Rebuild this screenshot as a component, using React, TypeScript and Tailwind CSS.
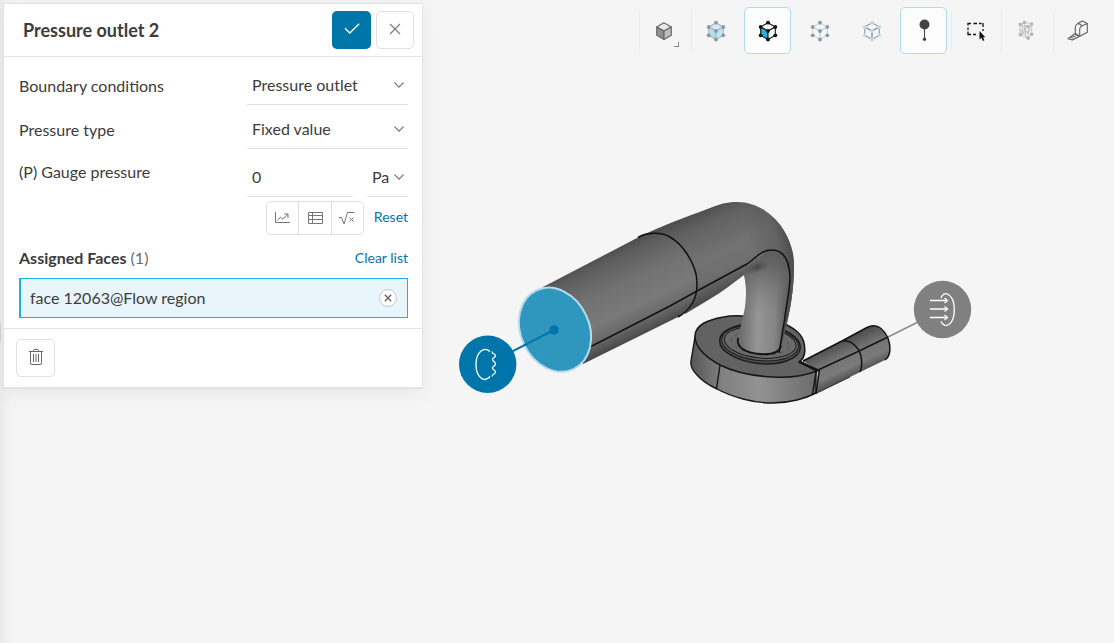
import type { ReactNode } from "react";

const Chevron = ({ className = "" }: { className?: string }) => (
  <svg
    viewBox="0 0 10 6"
    className={`h-[6px] w-[10px] pointer-events-none ${className}`}
    fill="none"
    stroke="#777"
    strokeWidth="1.1"
    aria-hidden="true"
  >
    <path d="M0.5 0.5 5 5.2 9.5 0.5" />
  </svg>
);

type SelectProps = {
  id: string;
  label: string;
  options: string[];
};

const SelectRow = ({ id, label, options }: SelectProps) => (
  <div className="flex items-center">
    <label htmlFor={id} className="w-[228px] shrink-0 pb-px">
      {label}
    </label>
    <div className="grid flex-1 items-center border-b border-[#dfdfdf] pb-[2px]">
      <select
        id={id}
        className="col-start-1 row-start-1 h-[35px] w-full appearance-none bg-transparent pl-[5px] outline-none"
      >
        {options.map((option) => (
          <option key={option}>{option}</option>
        ))}
      </select>
      <Chevron className="col-start-1 row-start-1 mr-1 justify-self-end" />
    </div>
  </div>
);

const toolClass =
  "flex h-8 items-center justify-center text-[#777] border-[#dfdfdf]";

const BoundaryPanel = () => (
  <section
    aria-labelledby="panel-title"
    className="border border-b-2 border-[#e3e3e3] bg-white text-base text-[#3c3c3c] shadow-[0_4px_20px_rgba(0,0,0,0.06)]"
  >
    <header className="flex items-center gap-[5px] border-b border-[#e3e3e3] py-[7px] pl-[19px] pr-2">
      <h1 id="panel-title" className="flex-1 text-lg font-bold leading-6">
        Pressure outlet 2
      </h1>
      <button
        aria-label="Apply"
        className="flex h-[38px] w-[39px] items-center justify-center rounded-[5px] bg-[#0075a9] pb-[2px]"
      >
        <svg viewBox="0 0 16 12" className="h-3 w-4" fill="none" stroke="#fff" strokeWidth="1.3">
          <path d="M1 5.2 5.8 10 15.2 0.8" />
        </svg>
      </button>
      <button
        aria-label="Close"
        className="flex h-[38px] w-[38px] items-center justify-center rounded-[5px] border border-[#e0e0e0] pb-[2px]"
      >
        <svg viewBox="0 0 12 12" className="h-3 w-3" fill="none" stroke="#777" strokeWidth="1.1">
          <path d="M1 1 11 11M11 1 1 11" />
        </svg>
      </button>
    </header>

    <div className="pb-[10px] pl-[15px] pr-[14px] pt-[10px]">
      <div className="flex flex-col gap-[6px]">
        <SelectRow
          id="condition"
          label="Boundary conditions"
          options={["Pressure outlet", "Pressure inlet", "Velocity inlet", "Wall"]}
        />
        <SelectRow
          id="pressure-type"
          label="Pressure type"
          options={["Fixed value", "Mean value"]}
        />
      </div>

      <div className="mt-[10px] flex items-start">
        <label htmlFor="gauge" className="w-[228px] shrink-0 leading-[26px]">
          (P) Gauge pressure
        </label>
        <input
          id="gauge"
          defaultValue="0"
          className="h-[38px] min-w-0 flex-1 border-b border-[#dfdfdf] pb-[2px] pl-[5px] outline-none"
        />
        <div className="ml-[14px] grid w-[41px] items-center border-b border-[#dfdfdf] pb-[2px]">
          <select
            aria-label="Pressure unit"
            className="col-start-1 row-start-1 h-[35px] w-full appearance-none bg-transparent pl-[5px] outline-none"
          >
            <option>Pa</option>
            <option>psi</option>
          </select>
          <Chevron className="col-start-1 row-start-1 mr-1 justify-self-end" />
        </div>
      </div>

      <div className="mt-1 flex items-center justify-end gap-[10px]">
        <div className="flex rounded-[5px] border border-[#dfdfdf]">
          <button aria-label="Upload table" className={`${toolClass} w-[31px]`}>
            <svg viewBox="0 0 16 12" className="h-3 w-4" fill="none" stroke="currentColor">
              <path d="M1.5 0V10.5H16" />
              <path d="M3.5 8.5 6.5 5 9 7.2 13.5 2.5M10 2H14V6" />
            </svg>
          </button>
          <button aria-label="Table" className={`${toolClass} w-[33px] border-l`}>
            <svg viewBox="0 0 16 12" className="h-3 w-4" fill="none" stroke="currentColor">
              <path d="M1.5 0.5H15.5V11.5H1.5ZM5.5 0.5V11.5M1.5 3.5H15.5M1.5 7.5H15.5" />
            </svg>
          </button>
          <button aria-label="Formula" className={`${toolClass} w-8 border-l`}>
            <svg viewBox="0 0 16 14" className="h-[14px] w-4" fill="none" stroke="currentColor">
              <path d="M0 6.5H2.5L5 13 8.5 1.5H15.5" />
              <path d="M10.5 6.5 14.5 10.5M14.5 6.5 10.5 10.5" />
            </svg>
          </button>
        </div>
        <button className="pb-[2px] text-sm text-[#0075a9]">Reset</button>
      </div>

      <div className="mt-[11px] flex items-center justify-between leading-6">
        <h2>
          <span className="font-bold">Assigned Faces</span>{" "}
          <span className="text-[#6b6b6b]">(1)</span>
        </h2>
        <button className="text-sm text-[#0075a9]">Clear list</button>
      </div>

      <ul className="mt-2">
        <li className="flex h-10 items-center justify-between border border-l-2 border-[#21b0e0] bg-[#e8f5fb] pl-[9px] pr-[10px]">
          <span>face 12063@Flow region</span>
          <button
            aria-label="Remove face"
            className="flex h-[18px] w-[18px] items-center justify-center rounded-full border border-[#c6c6c6] bg-white"
          >
            <svg viewBox="0 0 8 8" className="h-2 w-2" fill="none" stroke="#666" strokeWidth="1.4">
              <path d="M0.8 0.8 7.2 7.2M7.2 0.8 0.8 7.2" />
            </svg>
          </button>
        </li>
      </ul>
    </div>

    <footer className="border-t border-[#e3e3e3] px-3 py-[10px]">
      <button
        aria-label="Delete"
        className="flex h-[38px] w-[39px] items-center justify-center rounded-[5px] border border-[#e0e0e0] pb-[2px]"
      >
        <svg viewBox="0 0 14 16" className="h-4 w-[14px]" fill="none" stroke="#666">
          <path d="M0 2.5H14M4.5 2.5V1.5Q4.5 0.5 5.5 0.5H8.5Q9.5 0.5 9.5 1.5V2.5" />
          <path d="M1.5 2.5V14Q1.5 15.5 3 15.5H11Q12.5 15.5 12.5 14V2.5" />
          <path d="M4.5 5V13M7 5V13M9.5 5V13" />
        </svg>
      </button>
    </footer>
  </section>
);

const cubeNodes = [
  [12, 3.7],
  [4.7, 8],
  [19.3, 8],
  [12, 12],
  [4.7, 16.3],
  [19.3, 16.3],
  [12, 20.5],
];

type CubeProps = {
  line: string;
  node?: string;
  top?: string;
  left?: string;
  right?: string;
};

const Cube = ({ line, node, top = "none", left = "none", right = "none" }: CubeProps) => (
  <svg viewBox="0 0 24 24" className="h-6 w-6" aria-hidden="true">
    <g stroke={line} strokeWidth="1.1" strokeLinejoin="round">
      <path d="M12 3.7 19.3 8 12 12 4.7 8Z" fill={top} />
      <path d="M4.7 8 12 12V20.5L4.7 16.3Z" fill={left} />
      <path d="M19.3 8 12 12V20.5L19.3 16.3Z" fill={right} />
    </g>
    {node &&
      cubeNodes.map(([cx, cy]) => <circle key={`${cx}-${cy}`} cx={cx} cy={cy} r="1.9" fill={node} />)}
  </svg>
);

type ToolProps = {
  label: string;
  active?: boolean;
  divider?: boolean;
  narrow?: boolean;
  children: ReactNode;
};

const Tool = ({ label, active, divider, narrow, children }: ToolProps) => (
  <div className={`flex items-center ${narrow ? "w-[50px]" : "w-[52px]"}`}>
    <span className={`h-10 w-px ${divider ? "bg-[#ebebeb]" : ""}`} />
    <button
      aria-label={label}
      aria-pressed={active}
      className={`relative flex h-[47px] w-[47px] items-center justify-center rounded-[5px] border pt-px ${
        active ? "border-[#b3daec] bg-[#fcfcfc]" : "border-transparent"
      }`}
    >
      {children}
    </button>
  </div>
);

const Toolbar = () => (
  <nav aria-label="View tools" className="flex justify-end pr-[9px]">
    <Tool label="Render mode" divider>
      <Cube line="#666" top="#e9e9e9" left="#909090" right="#bdbdbd" />
      <span className="absolute bottom-[6px] right-[7px] h-[5px] w-[5px] border-b border-r border-[#888]" />
    </Tool>
    <Tool label="Select volumes" divider>
      <Cube line="#a3b9c3" node="#979797" top="#d3ebf6" left="#b5dff1" right="#c3e5f3" />
    </Tool>
    <Tool label="Select faces" active>
      <Cube line="#1a1a1a" node="#111" left="#21b0e0" top="#fff" right="#fff" />
    </Tool>
    <Tool label="Select edges">
      <Cube line="#b7e0f2" node="#979797" />
    </Tool>
    <Tool label="Select vertices">
      <Cube line="#999" node="#b5e0f3" />
    </Tool>
    <Tool label="Probe" active>
      <svg viewBox="0 0 24 24" className="h-6 w-6" aria-hidden="true">
        <circle cx="12.5" cy="5.5" r="5" fill="#444" />
        <path d="M12.5 9V20" stroke="#444" strokeWidth="1.1" />
        <circle cx="12.5" cy="20.3" r="1.7" fill="#444" />
      </svg>
    </Tool>
    <Tool label="Box select" divider narrow>
      <svg viewBox="0 0 24 24" className="h-6 w-6" aria-hidden="true">
        <path
          d="M4 6.5V4.5H7M9.5 4.5H13M15 4.5H17.5M19 4V8M19 10V12M4 8.5V11M4 12.5V15.5H7M9 15.5H12"
          fill="none"
          stroke="#111"
          strokeWidth="1.3"
        />
        <path d="M15.5 12V20.5L17.4 18.8 18.9 22 20.4 21.3 19 18.2H21.3Z" fill="#111" />
      </svg>
    </Tool>
    <Tool label="Mesh" divider>
      <svg viewBox="0 0 24 24" className="h-6 w-6" fill="none" stroke="#c4c4c4" strokeWidth="0.9" aria-hidden="true">
        <path d="M6 5.5 10.5 3.3 17.7 4.7 14 7.5ZM6 5.5V15.5L14.2 19.3V7.5M17.7 4.7V15.3L14.2 19.3M10.5 3.3V13L6 15.5M10.5 13 17.700 15.300" />
        <path d="M6 10.500 14 13.500 17.700 10M8.500 6.500V16.500M11.500 7V18M6 5.500 14 13.500M6 15.500 14 7.500M6 10.500 14.200 19.300M14 13.500 17.700 4.700" />
        <g fill="#b4b4b4" stroke="none">
          <circle cx="6.200" cy="5.500" r="1.700" />
          <circle cx="10.500" cy="3.500" r="1.700" />
          <circle cx="17.700" cy="4.900" r="1.700" />
          <circle cx="14" cy="7.500" r="1.700" />
          <circle cx="6.200" cy="15.700" r="1.700" />
          <circle cx="14.200" cy="19.200" r="1.700" />
          <circle cx="17.700" cy="15.300" r="1.700" />
        </g>
      </svg>
    </Tool>
    <Tool label="Measure" divider>
      <svg
        viewBox="0 0 24 24"
        className="h-6 w-6"
        fill="none"
        stroke="#606060"
        strokeWidth="1.1"
        strokeLinejoin="round"
        aria-hidden="true"
      >
        <path d="M9.300 14.500V8Q9.700 5.800 11.700 4.600L16.300 2 21.300 4.500V13.300L13.700 17.300" />
        <path d="M13.700 17.300V10Q14 7.600 16.300 6.700L21.300 4.500M11.700 4.600Q14.300 4.600 16 6.800" />
        <path d="M9.300 14.500 2 19.800 6.500 21 13.700 17.300Z" />
        <path d="M4.500 18.500 7.500 19.300M6.600 17 9.500 18M9 15.600 12 16.800" />
      </svg>
    </Tool>
  </nav>
);

const Model = () => (
  <svg viewBox="450 190 530 220" className="h-[220px] w-[530px]" role="img" aria-label="Flow region geometry">
    <defs>
      <linearGradient id="pipe" gradientUnits="userSpaceOnUse" x1="620" y1="243" x2="660" y2="327">
        <stop offset="0" stopColor="#484848" />
        <stop offset="0.12" stopColor="#5c5c5c" />
        <stop offset="0.4" stopColor="#717171" />
        <stop offset="0.68" stopColor="#7a7a7a" />
        <stop offset="0.85" stopColor="#696969" />
        <stop offset="1" stopColor="#484848" />
      </linearGradient>
      <linearGradient id="bend" gradientUnits="userSpaceOnUse" x1="708" y1="205" x2="744" y2="283">
        <stop offset="0" stopColor="#4c4c4c" />
        <stop offset="0.2" stopColor="#626262" />
        <stop offset="0.55" stopColor="#727272" />
        <stop offset="0.78" stopColor="#6f6f6f" />
        <stop offset="1" stopColor="#4c4c4c" />
      </linearGradient>
      <linearGradient id="outer" gradientUnits="userSpaceOnUse" x1="752" y1="250" x2="794" y2="236">
        <stop offset="0" stopColor="#555" stopOpacity="0" />
        <stop offset="0.6" stopColor="#5a5a5a" stopOpacity="0.6" />
        <stop offset="1" stopColor="#424242" />
      </linearGradient>
      <linearGradient id="neck" x1="0" x2="1" y1="0" y2="0.05">
        <stop offset="0" stopColor="#646464" />
        <stop offset="0.4" stopColor="#969696" />
        <stop offset="0.7" stopColor="#858585" />
        <stop offset="1" stopColor="#4c4c4c" />
      </linearGradient>
      <linearGradient id="neckShade" x1="0" x2="0" y1="0" y2="1">
        <stop offset="0" stopColor="#5a5a5a" />
        <stop offset="0.3" stopColor="#606060" stopOpacity="0.85" />
        <stop offset="1" stopColor="#777" stopOpacity="0" />
      </linearGradient>
      <radialGradient id="crease">
        <stop offset="0" stopColor="#444" />
        <stop offset="1" stopColor="#555" stopOpacity="0" />
      </radialGradient>
      <linearGradient id="side" x1="0" x2="1">
        <stop offset="0" stopColor="#585858" />
        <stop offset="0.25" stopColor="#808080" />
        <stop offset="0.55" stopColor="#929292" />
        <stop offset="1" stopColor="#6c6c6c" />
      </linearGradient>
      <linearGradient id="branch" gradientUnits="userSpaceOnUse" x1="840" y1="340" x2="857" y2="377">
        <stop offset="0" stopColor="#4a4a4a" />
        <stop offset="0.4" stopColor="#747474" />
        <stop offset="0.7" stopColor="#7b7b7b" />
        <stop offset="1" stopColor="#484848" />
      </linearGradient>
    </defs>

    {/* volute body */}
    <path
      d="M695 337 691 361Q690 368 697 375 704 383 717 389 728 395 743 399 758 403 773 403 785 403 797 400 806 398 816 393V371L760 350Z"
      fill="url(#side)"
      stroke="#161616"
      strokeWidth="1.4"
    />
    <path
      d="M742 316C730 315 714 318 704 323 697 327 693 333 696 342 699 351 709 359 720 365 734 372 752 376 773 377 790 378 804 376 817 371L799 362C805 358 806 352 804 343 802 334 795 329 785 324Z"
      fill="#626262"
      stroke="#161616"
      strokeWidth="1.5"
    />
    <path d="M720 365 716.500 389" stroke="#161616" strokeWidth="1.4" />
    <g fill="none" stroke="#1c1c1c" transform="rotate(6 760 344)">
      <ellipse cx="760" cy="344" rx="40.500" ry="19.500" fill="#4c4c4c" strokeWidth="1.500" />
      <ellipse cx="760" cy="343" rx="38.500" ry="17.500" fill="#666" />
      <ellipse cx="760" cy="342.500" rx="36" ry="15.500" fill="#6b6b6b" />
      <ellipse cx="760" cy="343" rx="29" ry="11.500" stroke="#565656" strokeDasharray="4 4" />
    </g>

    {/* side branch */}
    <path
      d="M803 361 866 327.500C878 322 884 330 888 338 891 346 891 356 885 360L816 393.500 818 370Z"
      fill="url(#branch)"
    />
    <g fill="none" stroke="#141414" strokeWidth="1.500">
      <path d="M803 361 843 340.500 867 327.500C878 322 884 330 888 338 891 346 891 356 885 360" />
      <path d="M843 340.500C853 341 859 348 861 356 862 362 862 368 860 372" />
      <path d="M818 370 857 352 888 337" />
      <path d="M799 361.500 818 370.500" strokeWidth="2.600" />
      <path d="M816.500 370 812.500 394M819.500 369.500 816 393.500" />
      <path d="M816 393.500 850 377" strokeWidth="0.800" />
    </g>

    {/* pipe, bend and neck */}
    <path
      d="M744 262 744 275C747 287 746 298 745 307 743 319 739 330 738 341 742 350 750 354 763 354 773 354 780 352 781 346L787 323C790 311 793 295 793 280L788 258 772 246Z"
      fill="url(#neck)"
    />
    <path d="M744 270V275C747 287 746 298 745 307L743 314H789L793 280 786 254 772 246Z" fill="url(#neckShade)" />
    <path
      d="M638 237.500C661 226 686 217 710 208 721 203.500 729 202 737 202 747 202 756 205 764 210 781 221 790 238 793 254 796 274 792 299 787 323L781 347 779 352 785 317C789 296 791 282 790 276 789 259 784 250 772 250 764 250 761 255 755 262L744 275C733 283 722 292 710 299L685 314Z"
      fill="url(#bend)"
    />
    <path
      d="M720 204Q729 202 737 202C747 202 756 205 764 210 781 221 790 238 793 254 796 274 792 299 787 323L781 347 785 317C789 296 791 282 790 276 789 259 784 250 772 250L745 263Z"
      fill="url(#outer)"
    />
    <ellipse cx="757" cy="267" rx="14" ry="6" transform="rotate(-20 757 267)" fill="url(#crease)" />
    <path d="M543 287 638 237.500C647 232 660 231 672 237 690 248 699 272 697 287 696 299 690 310 678 317L583 364Z" fill="url(#pipe)" />
    <g fill="none" stroke="#111" strokeWidth="1.500">
      <path d="M638 237.500C645 233 660 231 670 237 684 245 693 262 696 274 698 286 697 295 693 302 689 309 684 314 678 317" />
      <path d="M591 346.500 670 306 697 291 723 277 747 264C757 257 761 250 772 250 784 250 789 262 790 276 790 291 786 305 785 317L779 353" />
      <path d="M738 338C736 347 745 353 760 354 771 355 779 353 781 346" strokeWidth="1.800" />
    </g>

    {/* assigned face */}
    <ellipse
      cx="555"
      cy="329.700"
      rx="34.300"
      ry="43.500"
      transform="rotate(-25 555 329.700)"
      fill="#2f97bd"
      stroke="#b5dcee"
      strokeWidth="2"
    />
    <path d="M488 364 554 330" stroke="#0075a9" strokeWidth="2" />
    <path d="M552 325.500H556L558.500 328V332L556 334.500H552L549.500 332V328Z" fill="#0075a9" />
    <circle cx="487.700" cy="364.300" r="28.700" fill="#0075a9" />
    <g fill="none" stroke="#fff" strokeWidth="1.300">
      <path d="M490 351.500C484 346 476 352 476 364.500 476 377 484 383.500 490 376.500" />
      <path d="M492 351.500Q492 353 494 354 497 355.500 494 357.500 491 359.500 494 361.500 497 364 494 366 491 368 494 370 497 372 494 374 492 375 492 376.500" />
    </g>

    {/* inlet marker */}
    <path d="M888 337 918 322" stroke="#8a8a8a" strokeWidth="1.500" />
    <circle cx="942.500" cy="309.500" r="28.700" fill="#808080" />
    <g fill="none" stroke="#fff" strokeWidth="1.300">
      <path d="M941 298C943 290 954 293 954.300 309 954.500 326 944 329 941 321.500" />
      <path d="M930 300.500H947M930 309H947M930 317.500H947" />
      <path d="M944.500 298 947.500 300.500 944.500 303M944.500 306.500 947.500 309 944.500 311.500M944.500 315 947.500 317.500 944.500 320" />
    </g>
  </svg>
);

const App = () => {
  return (
    <main className="relative flex min-h-screen items-start bg-[#f5f5f5] font-[Lato,'Open_Sans',sans-serif] shadow-[inset_12px_0_14px_-10px_rgba(0,0,0,0.07)]">
      <span className="absolute left-0 top-[323px] h-[19px] w-px bg-[#cfcfcf]" />
      <div className="w-[423px] shrink-0 pl-[3px] pt-[3px]">
        <BoundaryPanel />
      </div>
      <div className="min-w-0 flex-1 pt-[7px]">
        <Toolbar />
        <div className="ml-[27px] mt-[136px]">
          <Model />
        </div>
      </div>
    </main>
  );
};

export default App;
